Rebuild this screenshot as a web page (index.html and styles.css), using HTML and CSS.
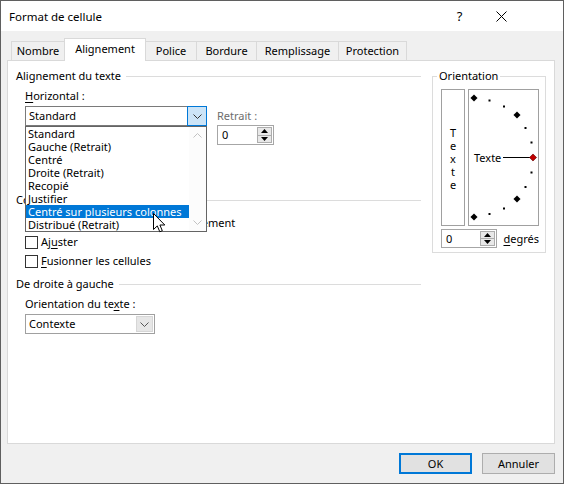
FILE: index.html
```html
<!DOCTYPE html>
<html lang="fr">
<head>
<meta charset="utf-8">
<title>Format de cellule</title>
<link rel="stylesheet" href="styles.css">
</head>
<body>
<div class="window">
  <div class="titlebar">
    <span class="title">Format de cellule</span>
    <div class="title-buttons">
      <span class="help">?</span>
      <span class="close">
        <svg width="11" height="11" viewBox="0 0 11 11"><path d="M0.5 0.5 L10.5 10.5 M10.5 0.5 L0.5 10.5" stroke="#000" stroke-width="1" fill="none"/></svg>
      </span>
    </div>
  </div>

  <div class="dialog">
    <div class="tabs">
      <div class="tab tab-nombre">Nombre</div>
      <div class="tab tab-align active">Alignement</div>
      <div class="tab tab-police">Police</div>
      <div class="tab tab-bordure">Bordure</div>
      <div class="tab tab-rempl">Remplissage</div>
      <div class="tab tab-protect">Protection</div>
    </div>

    <div class="panel">
      <div class="left">
        <div class="section-head"><span>Alignement du texte</span></div>

        <div class="align-row">
          <div class="field-h">
            <div class="lbl"><u>H</u>orizontal :</div>
            <div class="combo combo-open">
              <span class="combo-value">Standard</span>
              <span class="combo-btn">
                <svg width="9" height="5" viewBox="0 0 9 5"><path d="M0.5 0.5 L4.5 4.5 L8.5 0.5" fill="none" stroke="#333"/></svg>
              </span>
            </div>

            <div class="droplist">
              <ul class="items">
                <li>Standard</li>
                <li>Gauche (Retrait)</li>
                <li>Centré</li>
                <li>Droite (Retrait)</li>
                <li>Recopié</li>
                <li>Justifier</li>
                <li class="selected">Centré sur plusieurs colonnes</li>
                <li>Distribué (Retrait)</li>
              </ul>
              <div class="scroll">
                <span class="scroll-btn">
                  <svg width="9" height="5" viewBox="0 0 9 5"><path d="M0.5 4.5 L4.5 0.5 L8.5 4.5" fill="none" stroke="#c2c2c2"/></svg>
                </span>
                <span class="scroll-btn">
                  <svg width="9" height="5" viewBox="0 0 9 5"><path d="M0.5 0.5 L4.5 4.5 L8.5 0.5" fill="none" stroke="#c2c2c2"/></svg>
                </span>
              </div>
              <svg class="cursor" width="13" height="20" viewBox="0 0 13 20"><path d="M0.5 0.5 L0.5 16.5 L4.3 12.9 L6.8 18.8 L9.3 17.7 L6.9 12 L11.8 12 Z" fill="#fff" stroke="#000" stroke-width="1" stroke-linejoin="miter"/></svg>
            </div>
          </div>

          <div class="field-r">
            <div class="lbl lbl-gray">Retrait :</div>
            <div class="spin">
              <span class="spin-val">0</span>
              <span class="spin-btns">
                <span class="spin-b"><svg width="7" height="4" viewBox="0 0 7 4"><path d="M0 4 L3.5 0 L7 4 Z" fill="#000"/></svg></span>
                <span class="spin-b"><svg width="7" height="4" viewBox="0 0 7 4"><path d="M0 0 L3.5 4 L7 0 Z" fill="#000"/></svg></span>
              </span>
            </div>
          </div>
        </div>

        <div class="section-head head-ctrl"><span>Contrôle du texte</span></div>
        <div class="checks">
          <div class="check"><span class="box"></span><span>Renvo<u>y</u>er à la ligne automatiquement</span></div>
          <div class="check"><span class="box"></span><span>Aj<u>u</u>ster</span></div>
          <div class="check"><span class="box"></span><span><u>F</u>usionner les cellules</span></div>
        </div>

        <div class="section-head head-rtl"><span>De droite à gauche</span></div>
        <div class="rtl">
          <div class="lbl">Orientation du te<u>x</u>te :</div>
          <div class="combo combo-small">
            <span class="combo-value">Contexte</span>
            <span class="combo-btn">
              <svg width="9" height="5" viewBox="0 0 9 5"><path d="M0.5 0.5 L4.5 4.5 L8.5 0.5" fill="none" stroke="#555"/></svg>
            </span>
          </div>
        </div>
      </div>

      <fieldset class="orient">
        <legend>Orientation</legend>
        <div class="orient-body">
          <div class="vtext"><span>T</span><span>e</span><span>x</span><span>t</span><span>e</span></div>
          <div class="arc">
            <svg width="69" height="135" viewBox="0 0 69 135">
              <g fill="#000">
                <rect x="2.5" y="5.5" width="5" height="5" transform="rotate(45 5 8)"/>
                <rect x="19.5" y="9.5" width="2" height="2"/>
                <rect x="34" y="15.5" width="2" height="2"/>
                <rect x="45.5" y="22.5" width="5" height="5" transform="rotate(45 48 25)"/>
                <rect x="55.5" y="37" width="2" height="2"/>
                <rect x="61.5" y="51.5" width="2" height="2"/>
                <rect x="61.5" y="81.5" width="2" height="2"/>
                <rect x="55.5" y="96" width="2" height="2"/>
                <rect x="45.5" y="106.5" width="5" height="5" transform="rotate(45 48 109)"/>
                <rect x="34" y="117.5" width="2" height="2"/>
                <rect x="19.5" y="123" width="2" height="2"/>
                <rect x="2.5" y="124.5" width="5" height="5" transform="rotate(45 5 127)"/>
              </g>
              <line x1="34" y1="67.5" x2="61" y2="67.5" stroke="#000" stroke-width="1"/>
              <rect x="61.5" y="65" width="5" height="5" transform="rotate(45 64 67.5)" fill="#c00000" stroke="#600" stroke-width="0.6"/>
              <text x="5" y="71.5" class="arc-text">Texte</text>
            </svg>
          </div>
        </div>
        <div class="orient-spin">
          <div class="spin spin-deg">
            <span class="spin-val">0</span>
            <span class="spin-btns">
              <span class="spin-b"><svg width="7" height="4" viewBox="0 0 7 4"><path d="M0 4 L3.5 0 L7 4 Z" fill="#000"/></svg></span>
              <span class="spin-b"><svg width="7" height="4" viewBox="0 0 7 4"><path d="M0 0 L3.5 4 L7 0 Z" fill="#000"/></svg></span>
            </span>
          </div>
          <span class="deg"><u>d</u>egrés</span>
        </div>
      </fieldset>
    </div>

    <div class="buttons">
      <button class="btn btn-default">OK</button>
      <button class="btn">Annuler</button>
    </div>
  </div>
</div>
</body>
</html>
```

FILE: styles.css
```css
* { box-sizing: border-box; }
html, body { margin: 0; padding: 0; }
body {
  width: 564px;
  height: 484px;
  font-family: "Noto Sans", "Open Sans", sans-serif;
  font-size: 11px;
  color: #000;
  background: #f0f0f0;
}
u { text-decoration: underline; text-underline-offset: 2px; }

.window {
  width: 564px;
  height: 484px;
  border: 1px solid #5f5f5f;
  display: flex;
  flex-direction: column;
  background: #f0f0f0;
}

/* Title bar */
.titlebar {
  height: 30px;
  background: #fff;
  display: flex;
  align-items: center;
  justify-content: space-between;
  padding-left: 8px;
}
.title { font-size: 11.5px; }
.title-buttons { display: flex; align-items: center; height: 100%; padding-right: 42px; }
.help { width: 40px; text-align: center; font-size: 13px; padding-right: 3px; }
.close { width: 40px; display: flex; justify-content: center; align-items: center; }

/* Dialog body */
.dialog {
  flex: 1;
  display: flex;
  flex-direction: column;
  padding: 7px 8px 0 6px;
}

.tabs {
  display: flex;
  align-items: flex-end;
  height: 22px;
  padding-left: 4px;
  position: relative;
  z-index: 2;
}
.tab {
  height: 19px;
  border: 1px solid #d9d9d9;
  border-bottom: none;
  margin-left: -1px;
  display: flex;
  align-items: center;
  justify-content: center;
  background: #f0f0f0;
  padding-bottom: 1px;
}
.tab.active {
  height: 23px;
  margin-bottom: -1px;
  background: #fff;
  position: relative;
  z-index: 3;
  padding-bottom: 3px;
}
.tab-nombre { width: 54px; margin-left: 0; }
.tab-align { width: 82px; }
.tab-police { width: 52px; }
.tab-bordure { width: 61px; }
.tab-rempl { width: 83px; }
.tab-protect { width: 69px; }

.panel {
  height: 384px;
  background: #fff;
  border: 1px solid #d9d9d9;
  display: flex;
  align-items: flex-start;
  padding: 7px 8px 0 8px;
}

.left { width: 405px; margin-right: 11px; }

.section-head {
  display: flex;
  align-items: center;
  height: 16px;
  line-height: 16px;
}
.section-head::after {
  content: "";
  flex: 1;
  border-top: 1px solid #dcdcdc;
  margin-left: 5px;
  margin-top: 1px;
}
.head-ctrl { margin-top: 2px; }
.head-rtl { margin-top: 7px; }

.lbl { height: 16px; line-height: 16px; }
.lbl-gray { color: #6d6d6d; }

.align-row {
  display: flex;
  margin-top: 4px;
  padding-left: 9px;
}
/* the space below the Horizontal combo is covered by the open list */
.field-h { width: 182px; height: 102px; position: relative; }
.field-r { margin-left: 10px; padding-top: 20px; }

.combo {
  display: flex;
  height: 20px;
  margin-top: 2px;
  border: 1px solid #7a7a7a;
  background: #fff;
}
.combo-value { flex: 1; padding-left: 3px; line-height: 18px; }
.combo-btn {
  width: 20px;
  display: flex;
  align-items: center;
  justify-content: center;
}
.combo-open .combo-btn {
  margin: -1px -1px -1px 0;
  border: 1px solid #0078d7;
  background: #cce4f7;
  width: 20px;
}
.combo-small { width: 130px; border-color: #a0a0a0; }
.combo-small .combo-btn {
  width: 17px;
  margin: 1px 1px 1px 0;
  background: #e6e6e6;
  border: 1px solid #d6d6d6;
}

/* Drop-down list (overlay) */
.droplist {
  position: absolute;
  left: 0;
  top: 38px;
  width: 182px;
  height: 106px;
  border: 1px solid #646464;
  background: #fff;
  display: flex;
  z-index: 5;
}
.items {
  list-style: none;
  margin: 0;
  padding: 0;
  flex: 1;
}
.items li {
  height: 13px;
  line-height: 13px;
  padding-left: 2px;
  white-space: nowrap;
}
.items li.selected { background: #0078d7; color: #fff; }
.scroll {
  width: 17px;
  display: flex;
  flex-direction: column;
  justify-content: space-between;
  background: #fcfcfc;
}
.scroll-btn {
  height: 17px;
  display: flex;
  align-items: center;
  justify-content: center;
}
.cursor { position: absolute; left: 127px; top: 86px; }

/* Spin boxes */
.spin {
  display: flex;
  width: 57px;
  height: 20px;
  margin-top: 1px;
  border: 1px solid #a6a6a6;
  background: #fff;
  padding: 1px;
}
.spin-val { flex: 1; padding-left: 3px; line-height: 16px; }
.spin-btns {
  width: 15px;
  display: flex;
  flex-direction: column;
  border: 1px solid #adadad;
}
.spin-b {
  flex: 1;
  display: flex;
  align-items: center;
  justify-content: center;
  background: #e8e8e8;
}
.spin-b + .spin-b { border-top: 1px solid #adadad; }

/* Checkboxes */
.checks { padding-left: 9px; margin-top: 7px; }
.check {
  display: flex;
  align-items: center;
  height: 16px;
  line-height: 16px;
  white-space: nowrap;
}
.check + .check { margin-top: 3px; }
.box {
  width: 13px;
  height: 13px;
  border: 1px solid #333;
  background: #fff;
  margin-right: 3px;
}

.rtl { padding-left: 9px; margin-top: 4px; }

/* Orientation group */
.orient {
  width: 114px;
  margin: 0;
  padding: 5px 6px 4px 8px;
  border: 1px solid #dcdcdc;
  min-width: 0;
}
.orient legend {
  padding: 0 2px;
  margin-left: -4px;
  line-height: 16px;
}
.orient-body { display: flex; gap: 3px; }
.vtext {
  width: 24px;
  height: 137px;
  border: 1px solid #a0a0a0;
  display: flex;
  flex-direction: column;
  align-items: center;
  justify-content: center;
  line-height: 13px;
  padding-top: 2px;
}
.arc {
  width: 71px;
  height: 137px;
  border: 1px solid #a0a0a0;
}
.arc svg { display: block; }
.arc-text { font-family: "Noto Sans", "Open Sans", sans-serif; font-size: 11px; fill: #000; }

.orient-spin { display: flex; align-items: center; margin-top: 3px; }
.spin-deg { margin-top: 0; height: 19px; }
.deg { margin-left: 6px; }

/* Buttons */
.buttons {
  display: flex;
  justify-content: flex-end;
  gap: 10px;
  margin-top: 9px;
}
.btn {
  width: 73px;
  height: 21px;
  border: 1px solid #adadad;
  background: #e1e1e1;
  font-family: "Noto Sans", "Open Sans", sans-serif;
  font-size: 11px;
  color: #000;
  padding: 0;
}
.btn-default { border: 2px solid #0078d7; }
```
